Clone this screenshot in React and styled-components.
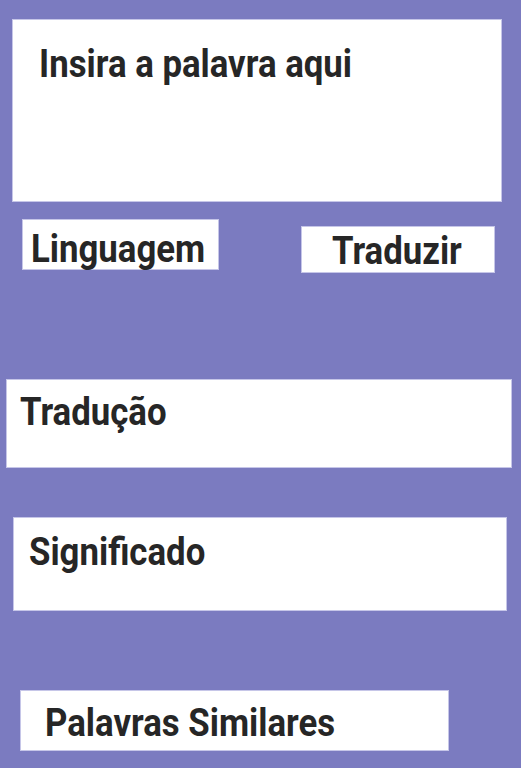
import React from "react";
import styled, { createGlobalStyle } from "styled-components";

const Global = createGlobalStyle`
  html, body { margin: 0; padding: 0; background: #7b7bc0; }
  body { font-family: Roboto, "Liberation Sans", sans-serif; }
  * { box-sizing: border-box; }
`;

const Page = styled.div`
  display: flex;
  flex-direction: column;
  align-items: flex-start;
  width: 521px;
  min-height: 768px;
  padding-top: 19px;
  background: #7b7bc0;
`;

const Panel = styled.div`
  width: ${(p) => p.$w}px;
  height: ${(p) => p.$h}px;
  margin-left: ${(p) => p.$ml}px;
  margin-top: ${(p) => p.$mt || 0}px;
  padding-left: ${(p) => p.$pl}px;
  padding-top: ${(p) => p.$pt}px;
  background: #ffffff;
  border: 1px solid #c6c6e8;
`;

const ButtonRow = styled.div`
  display: flex;
  align-items: flex-start;
  margin-top: 17px;
  margin-left: 22px;
`;

const ActionButton = styled.div`
  width: ${(p) => p.$w}px;
  height: ${(p) => p.$h}px;
  margin-left: ${(p) => p.$ml || 0}px;
  margin-top: ${(p) => p.$mt || 0}px;
  padding-left: ${(p) => p.$pl}px;
  padding-top: ${(p) => p.$pt}px;
  background: #ffffff;
  border: 1px solid #c6c6e8;
`;

const Label = styled.span`
  display: inline-block;
  color: #262626;
  font-family: Roboto, "Liberation Sans", sans-serif;
  font-size: 38px;
  font-weight: 700;
  line-height: 1;
  white-space: nowrap;
  transform: scaleX(0.915);
  transform-origin: left top;
`;

export default function App() {
  return (
    <>
      <Global />
      <Page>
        <Panel $w={490} $h={183} $ml={12} $pl={26} $pt={25}>
          <Label>Insira a palavra aqui</Label>
        </Panel>
        <ButtonRow>
          <ActionButton $w={197} $h={51} $pl={8} $pt={10}>
            <Label>Linguagem</Label>
          </ActionButton>
          <ActionButton $w={194} $h={47} $ml={82} $mt={7} $pl={30} $pt={5}>
            <Label>Traduzir</Label>
          </ActionButton>
        </ButtonRow>
        <Panel $w={506} $h={89} $ml={6} $mt={106} $pl={13} $pt={13}>
          <Label>Tradução</Label>
        </Panel>
        <Panel $w={494} $h={94} $ml={13} $mt={49} $pl={15} $pt={15}>
          <Label>Significado</Label>
        </Panel>
        <Panel $w={429} $h={61} $ml={20} $mt={79} $pl={24} $pt={13}>
          <Label>Palavras Similares</Label>
        </Panel>
      </Page>
    </>
  );
}
